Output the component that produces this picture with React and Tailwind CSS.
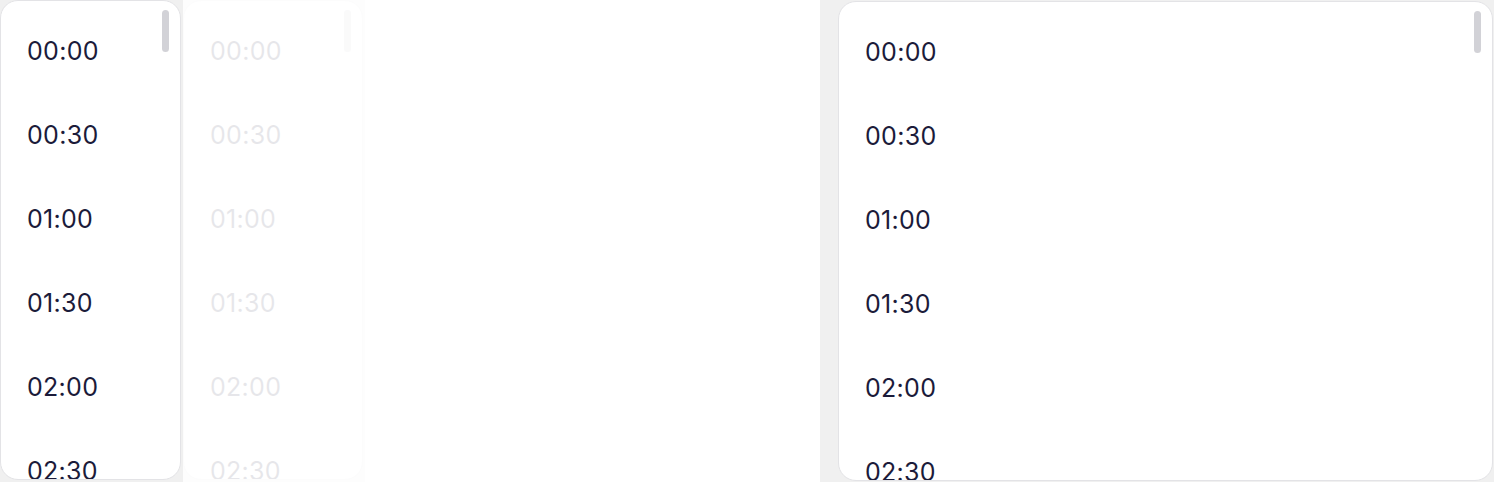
import React from 'react';

const times = ['00:00', '00:30', '01:00', '01:30', '02:00', '02:30', '03:00'];

const TimeList = ({ className = '' }) => (
  <div
    className={`relative h-[480px] overflow-hidden rounded-[18px] border border-[#e3e3e6] bg-white ${className}`}
  >
    <div className="flex flex-col pt-[8px]">
      {times.map((t) => (
        <div
          key={t}
          className="flex h-[84px] shrink-0 items-center pl-[26px] text-[25px] leading-none tracking-[0.3px] text-[#1b1b3a]"
          style={{ fontFamily: 'Inter, "Noto Sans", sans-serif' }}
        >
          {t}
        </div>
      ))}
    </div>
    {/* scrollbar thumb */}
    <div className="absolute right-[11px] top-[9px] h-[42px] w-[7px] rounded-full bg-[#d2d2d7]" />
  </div>
);

export default function App() {
  return (
    <div className="flex h-[482px] w-[1494px] overflow-hidden bg-white">
      <div className="h-[482px] w-[183px] shrink-0 bg-[#f0f0f0]">
        <TimeList className="w-[181px]" />
      </div>
      <div className="h-[482px] w-[182px] shrink-0 bg-[#f0f0f0] opacity-10">
        <TimeList className="w-[180px]" />
      </div>
      <div className="flex-1" />
      <div className="h-[482px] w-[674px] shrink-0 bg-[#f0f0f0] pl-[18px] pt-[1px]">
        <TimeList className="w-[655px]" />
      </div>
    </div>
  );
}
